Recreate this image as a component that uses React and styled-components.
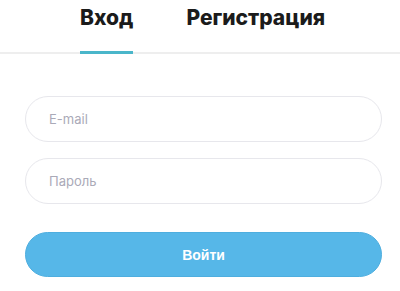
import React, { useState } from 'react';
import styled, { createGlobalStyle } from 'styled-components';

const GlobalStyle = createGlobalStyle`
  body {
    margin: 0;
    background: #ffffff;
    font-family: Inter, "Noto Sans", sans-serif;
  }
  * {
    box-sizing: border-box;
  }
`;

const Page = styled.div`
  width: 400px;
`;

const Tabs = styled.div`
  display: flex;
  gap: 53px;
  padding-left: 80px;
  height: 54px;
  border-bottom: 2px solid #eeeeee;
`;

const Tab = styled.button`
  background: none;
  border: none;
  padding: 5px 0 0;
  margin-bottom: -2px;
  height: 54px;
  display: flex;
  align-items: flex-start;
  font-family: Inter, "Noto Sans", sans-serif;
  font-size: 21px;
  font-weight: 800;
  letter-spacing: 0;
  color: #1b1b1b;
  cursor: pointer;
  border-bottom: 3px solid ${(props) => (props.active ? '#4ab6ca' : 'transparent')};
`;

const Form = styled.form`
  display: flex;
  flex-direction: column;
  width: 357px;
  margin: 42px 0 0 25px;
`;

const Field = styled.input`
  height: 46px;
  border: 1px solid #e7e7ec;
  border-radius: 23px;
  padding: 0 23px;
  margin-bottom: 16px;
  font-family: Inter, "Noto Sans", sans-serif;
  font-size: 13px;
  font-weight: 400;
  color: #333;
  outline: none;
  &::placeholder {
    color: #aaaab8;
  }
`;

const Submit = styled.button`
  height: 45px;
  margin-top: 12px;
  border: 1px solid #4eaedf;
  border-radius: 23px;
  background: #56b7e8;
  color: #ffffff;
  font-family: "Liberation Sans", Arial, sans-serif;
  font-size: 14px;
  font-weight: 700;
  cursor: pointer;
`;

const App = () => {
  const [tab, setTab] = useState('login');

  return (
    <Page>
      <GlobalStyle />
      <Tabs>
        <Tab active={tab === 'login'} onClick={() => setTab('login')}>
          Вход
        </Tab>
        <Tab active={tab === 'register'} onClick={() => setTab('register')}>
          Регистрация
        </Tab>
      </Tabs>
      <Form onSubmit={(e) => e.preventDefault()}>
        <Field type="email" placeholder="E-mail" />
        <Field type="password" placeholder="Пароль" />
        <Submit type="submit">Войти</Submit>
      </Form>
    </Page>
  );
};

export default App;
